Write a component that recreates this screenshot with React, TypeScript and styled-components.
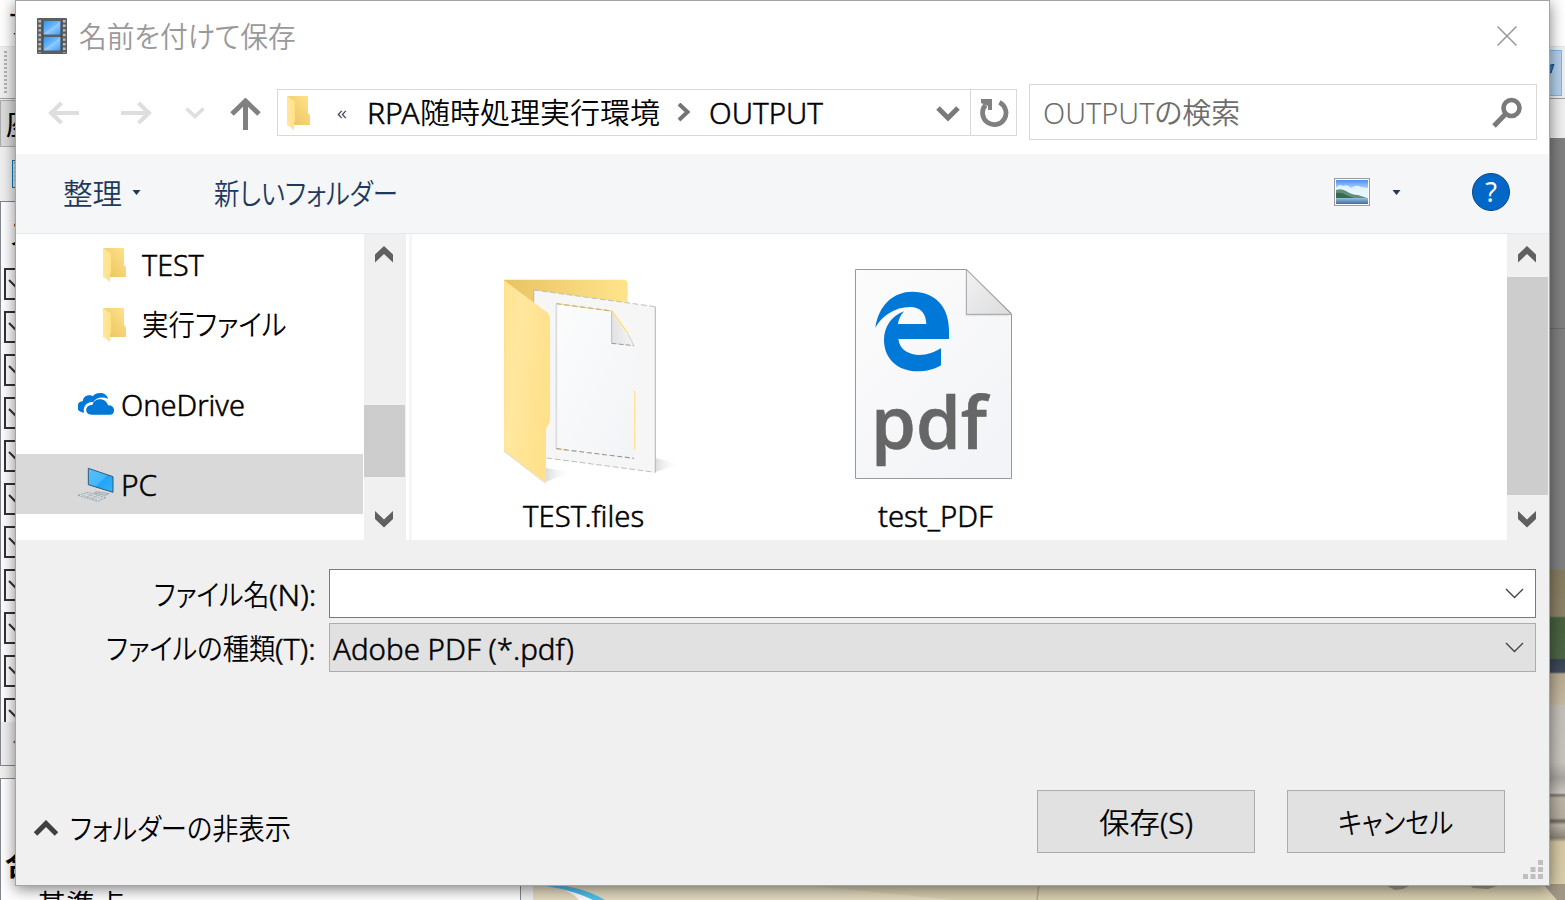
import React, { useLayoutEffect, useRef, useState } from 'react';
import styled, { createGlobalStyle } from 'styled-components';

const GlobalStyle = createGlobalStyle`
  * { box-sizing: border-box; }
  html, body { margin: 0; padding: 0; overflow: hidden; }
  body { font-family: "Noto Sans", "Noto Sans CJK JP", sans-serif; font-size: 30px; color: #000; }
  svg { display: block; flex: none; }
`;

/* ---------- text squeezed to a UI-font width ---------- */
const FitBox = styled.span<{ $w: number; $size: number; $color: string; $weight: number; $latin: boolean }>`
  display: block;
  flex: none;
  width: ${p => p.$w}px;
  height: 40px;
  line-height: 40px;
  font-size: ${p => p.$size}px;
  font-weight: ${p => p.$weight};
  color: ${p => p.$color};
  white-space: nowrap;
  font-feature-settings: "palt";
  -webkit-text-stroke: ${p => (p.$latin ? 0.5 : 0)}px ${p => p.$color};
`;
const FitInner = styled.span`
  display: inline-block;
  transform-origin: 0 50%;
`;
function Fit({ w, size = 29, color = '#000', weight = 350, children }:
  { w: number; size?: number; color?: string; weight?: number; children: string }) {
  const ref = useRef<HTMLSpanElement>(null);
  const [k, setK] = useState(1);
  useLayoutEffect(() => {
    if (ref.current) setK(w / ref.current.offsetWidth);
  }, [w, size, children]);
  return (
    <FitBox $w={w} $size={size} $color={color} $weight={weight} $latin={/^[ -~]+$/.test(children)}>
      <FitInner ref={ref} style={{ transform: `scaleX(${k})` }}>{children}</FitInner>
    </FitBox>
  );
}

/* ---------- application behind the dialog ---------- */
const Desktop = styled.div`
  position: relative;
  width: 1565px;
  height: 900px;
  overflow: hidden;
  background: #f0f0f0;
  display: flex;
  flex-direction: column;
`;
const MenuBar = styled.div`
  flex: none;
  height: 47px;
  background: #fff;
  border-bottom: 1px solid #e6e6e6;
  padding: 4px 0 0 8px;
`;
const ToolStrip = styled.div`
  flex: none;
  height: 52px;
  border-bottom: 1px solid #a0a0a0;
  display: flex;
  justify-content: space-between;
  align-items: center;
  padding: 0 3px 0 4px;
`;
const DotGrip = styled.div`
  width: 3px;
  height: 44px;
  background: repeating-linear-gradient(#b4b4b4 0 2px, transparent 2px 4px);
`;
const ActiveTool = styled.div`
  width: 30px;
  height: 46px;
  border: 1px solid #7fb9ea;
  background: #b5d2ec;
  display: flex;
  justify-content: flex-end;
  padding: 13px 6px 0 0;
`;
const Work = styled.div`
  flex: 1;
  min-height: 0;
  display: flex;
  align-items: stretch;
`;
const LeftPane = styled.div`
  width: 521px;
  display: flex;
  flex-direction: column;
`;
const CoordButton = styled.div`
  flex: none;
  width: 120px;
  height: 47px;
  margin-top: 1px;
  background: #dcdcdc;
  border: 1px solid #adadad;
  padding: 3px 0 0 5px;
`;
const MiniTools = styled.div`
  flex: none;
  height: 54px;
  padding: 13px 0 0 12px;
`;
const Tree = styled.div`
  flex: none;
  height: 565px;
  background: #fff;
  border: 1px solid #828790;
  padding-left: 3px;
  display: flex;
  flex-direction: column;
`;
const TreeHead = styled.div`
  height: 66px;
  padding: 12px 0 0 6px;
`;
const TreeRows = styled.div`
  height: 454px;
  overflow: hidden;
`;
const CheckBox = styled.div`
  width: 32px;
  height: 32px;
  margin-bottom: 11px;
  border: 2px solid #333;
  display: flex;
  align-items: center;
  padding: 3px 0 0 2px;
`;
const TreeScroll = styled.div`
  flex: 1;
  margin-left: -3px;
  background: #f0f0f0;
  padding: 12px 0 0 12px;
`;
const Detail = styled.div`
  flex: 1;
  min-height: 0;
  overflow: hidden;
  margin-top: 12px;
  background: #fff;
  border: 1px solid #828790;
  border-bottom: 0;
  padding: 4px 0 0 4px;
`;
const DetailHead = styled.div`
  height: 62px;
  padding-left: 8px;
`;
const Point = styled.div`
  padding-left: 32px;
`;
const Photo = styled.div`
  flex: 1;
  margin: 39px 0 0 12px;
  background: linear-gradient(#808080 0 190px, #6d6d6d 190px 191px, #808080 191px 432px,
    #857c5e 432px, #8b8268 478px, #46603d 480px, #4d6545 520px, #384354 522px, #414b5c 534px,
    #b9ab91 536px, #c5b9a2 566px, #c3bfb8 568px, #c8c4be 624px, #a9a59f 640px, #cdc9c2 655px,
    #77746a 657px, #bcb5a5 660px, #b5ad9d 680px, #6c675e 683px, #beb7a8 687px, #8c8476 700px, #d6c8a2 704px, #dbd0af 762px);
  display: flex;
  flex-direction: column;
  justify-content: flex-end;
`;

/* ---------- dialog ---------- */
const Dialog = styled.div`
  position: absolute;
  left: 15px;
  top: 0;
  width: 1535px;
  height: 886px;
  border: 1px solid #a4a4a4;
  background: #f0f0f0;
  box-shadow: 0 3px 14px rgba(0, 0, 0, .5);
  display: flex;
  flex-direction: column;
`;
const TitleBar = styled.div`
  height: 70px;
  background: #fff;
  display: flex;
  align-items: center;
  padding: 0 31px 0 20px;
`;
const TitleText = styled.div`
  flex: 1;
  padding: 1px 0 0 11px;
`;
const NavBar = styled.div`
  height: 83px;
  background: #fff;
  display: flex;
  align-items: center;
  padding: 2px 12px 1px 32px;
`;
const Gap = styled.div<{ $w: number }>`
  flex: none;
  width: ${p => p.$w}px;
`;
const UpArrow = styled.div`
  padding-top: 2px;
`;
const Address = styled.div`
  width: 740px;
  height: 47px;
  margin: -1px 0 0 16px;
  border: 1px solid #d9d9d9;
  display: flex;
  align-items: center;
  padding-left: 9px;
`;
const Refresh = styled.div`
  width: 46px;
  height: 45px;
  margin-left: auto;
  border-left: 1px solid #d9d9d9;
  display: flex;
  align-items: center;
  justify-content: center;
`;
const Search = styled.div`
  width: 508px;
  height: 56px;
  margin: -2px 0 0 12px;
  border: 1px solid #d9d9d9;
  display: flex;
  align-items: center;
  justify-content: space-between;
  padding: 2px 14px 0 13px;
`;
const CommandBar = styled.div`
  height: 80px;
  background: #f4f6f8;
  border-bottom: 1px solid #e6e9ec;
  display: flex;
  align-items: center;
  padding: 0 39px 3px 47px;
`;
const HelpButton = styled.div`
  width: 38px;
  height: 38px;
  border-radius: 50%;
  background: #0268c8;
  border: 1px solid #0a4788;
  color: #fff;
  font: 27px/35px "Noto Sans", sans-serif;
  text-align: center;
`;
const Browser = styled.div`
  height: 306px;
  background: #fff;
  display: flex;
`;
const NavTree = styled.div`
  width: 347px;
  margin-right: 1px;
  padding-top: 1px;
`;
const NavRow = styled.div<{ $indent: number; $selected?: boolean; $before?: number }>`
  height: 60px;
  margin-top: ${p => p.$before ?? 0}px;
  padding-left: ${p => p.$indent}px;
  background: ${p => (p.$selected ? '#d9d9d9' : 'transparent')};
  display: flex;
  align-items: center;
`;
const NavText = styled.div<{ $drop: number }>`
  padding-top: ${p => p.$drop}px;
`;
const ScrollBar = styled.div`
  width: 42px;
  height: 306px;
  background: #f0f0f0;
  display: flex;
  flex-direction: column;
  align-items: flex-start;
`;
const ScrollButton = styled.div<{ $top?: number }>`
  width: 41px;
  height: 43px;
  padding: ${p => p.$top ?? 12}px 0 0 10px;
`;
const Track = styled.div`
  flex: 1;
`;
const Thumb = styled.div<{ $top: number; $h: number }>`
  width: 41px;
  height: ${p => p.$h}px;
  margin-top: ${p => p.$top}px;
  background: #cdcdcd;
`;
const Splitter = styled.div`
  width: 3px;
  margin-left: 3px;
  background: #f6f6f6;
`;
const Files = styled.div`
  flex: 1;
  display: flex;
`;
const FileCell = styled.div<{ $w: number }>`
  width: ${p => p.$w}px;
  display: flex;
  flex-direction: column;
  align-items: center;
`;
const Thumbnail = styled.div<{ $top: number; $left: number; $right: number }>`
  height: 262px;
  padding: ${p => p.$top}px ${p => p.$right}px 0 ${p => p.$left}px;
`;
const Form = styled.div`
  padding-top: 29px;
  display: flex;
  flex-direction: column;
  gap: 5px;
`;
const FormRow = styled.div`
  display: flex;
  align-items: center;
  height: 49px;
`;
const FieldLabel = styled.div`
  width: 300px;
  margin-right: 13px;
  padding-top: 3px;
  display: flex;
  justify-content: flex-end;
`;
const Combo = styled.div<{ $filled?: boolean }>`
  width: 1207px;
  height: 49px;
  border: 1px solid ${p => (p.$filled ? '#adadad' : '#7a7a7a')};
  background: ${p => (p.$filled ? '#e1e1e1' : '#fff')};
  display: flex;
  align-items: center;
  padding: 0 11px 0 3px;
`;
const ComboText = styled.div`
  padding-top: 3px;
`;
const Chevron = styled.div`
  margin-left: auto;
`;
const Footer = styled.div`
  flex: 1;
  display: flex;
  align-items: flex-start;
  padding: 118px 6px 0 18px;
`;
const HideFolders = styled.div`
  display: flex;
  align-items: center;
  gap: 12px;
  padding-top: 17px;
  width: 1003px;
`;
const Button = styled.div`
  width: 218px;
  height: 63px;
  margin-right: 32px;
  border: 1px solid #adadad;
  background: #e1e1e1;
  display: flex;
  align-items: center;
  justify-content: center;
  padding: 2px 1px 0 0;
`;
const SizeGrip = styled.div`
  margin-left: -14px;
  padding-top: 70px;
`;

/* ---------- icons ---------- */
const FilmIcon = () => (
  <svg width="32" height="38" viewBox="0 0 32 38">
    <defs>
      <linearGradient id="film" x1="0" y1="0" x2="1" y2="1">
        <stop offset="0" stopColor="#2f93f5" /><stop offset=".48" stopColor="#6cb8fd" /><stop offset=".52" stopColor="#94ccff" /><stop offset="1" stopColor="#3c9cf5" />
      </linearGradient>
    </defs>
    <rect x="1" y="1" width="30" height="36" rx="1" fill="#5c5f62" />
    <rect x="7" y="4" width="18" height="13.5" fill="url(#film)" />
    <rect x="7" y="20" width="18" height="13.500" fill="url(#film)" />
    <path d="M7 4V34M25 4V34" stroke="#3c3f42" strokeWidth="1" />
    <path d="M3.700 3V36M28.300 3V36" stroke="#b9bdc0" strokeWidth="2.600" strokeDasharray="2.400 2.200" />
  </svg>
);
const Arrow = ({ flip = false }: { flip?: boolean }) => (
  <svg width="31" height="24" viewBox="0 0 31 24">
    <path d={flip ? 'M0 12H28M17.5 2 28 12 17.5 22' : 'M31 12H3M13.5 2 3 12 13.5 22'} fill="none" stroke="#dedede" strokeWidth="4" />
  </svg>
);
const SmallFolder = () => (
  <svg width="26" height="36" viewBox="0 0 26 36">
    <defs>
      <linearGradient id="sfb" x1="0" x2="1" y1="1" y2="0"><stop offset="0" stopColor="#e9c25b" /><stop offset="1" stopColor="#ffe38c" /></linearGradient>
      <linearGradient id="sff" x1="0" x2="1"><stop offset="0" stopColor="#ffe79b" /><stop offset="1" stopColor="#ffe189" /></linearGradient>
    </defs>
    <path d="M0 1H21V18L23 20V30H0Z" fill="url(#sfb)" />
    <path d="M0 1 8 6.500V26L7 28V35L0 29.500Z" fill="url(#sff)" />
  </svg>
);
const ScrollChevron = ({ down = false }: { down?: boolean }) => (
  <svg width="20" height="17" viewBox="0 0 20 17">
    <path d={down ? 'M1 0 10 8.500 19 0V8L10 16.500 1 8Z' : 'M1 16.500V8.500L10 0 19 8.500V16.500L10 8Z'} fill="#606060" />
  </svg>
);
const Caret = () => <svg width="9" height="5" viewBox="0 0 9 5"><path d="M.5 0H8.500L4.500 5Z" fill="#1e395b" /></svg>;
const ComboArrow = () => (
  <svg width="19" height="11" viewBox="0 0 19 11"><path d="M1 1 9.500 9.500 18 1" fill="none" stroke="#444" strokeWidth="1.4" /></svg>
);
const OneDrive = () => (
  <svg width="36" height="24" viewBox="234 487 108 72">
    <path d="M252 546C222 543 230 511 248 512C250 492 272 491 278 497C290 482 320 484 324 504C306 496 286 501 280 514C260 512 248 528 252 546Z" fill="#0078d7" />
    <path d="M274 552C252 552 254 522 277 523C282 500 318 499 324 524C348 523 346 552 331 552Z" fill="#0078d7" />
  </svg>
);
const Computer = () => (
  <svg width="37" height="35" viewBox="234 712 111 105">
    <defs><linearGradient id="scr" x1="0" x2="1" y1="0" y2="1"><stop offset="0" stopColor="#58c0ff" /><stop offset=".5" stopColor="#43b7ff" /><stop offset=".55" stopColor="#22a5f8" /><stop offset="1" stopColor="#35b0ff" /></linearGradient></defs>
    <path d="M234 797 264 788 318 804 293 815Z" fill="#d7dde2" stroke="#7d858b" strokeWidth="2" strokeDasharray="6 3" />
    <path d="M248 797 292 810M259 793 306 807M276 793 262 802M292 797 277 807" stroke="#a5adb2" strokeWidth="2" />
    <path d="M287 786 327 792 316 797 283 790Z" fill="#cbd3d8" stroke="#8a949b" strokeWidth="2" />
    <path d="M265 716 339 741V788L265 765Z" fill="url(#scr)" stroke="#315b78" strokeWidth="3" />
  </svg>
);
const Landscape = () => (
  <svg width="36" height="28" viewBox="0 0 36 28">
    <defs><linearGradient id="sky" x1="0" x2="0" y1="0" y2="1"><stop offset="0" stopColor="#4e8ff8" /><stop offset=".5" stopColor="#d9efff" /></linearGradient>
      <linearGradient id="sea" x1="0" x2="0" y1="0" y2="1"><stop offset="0" stopColor="#9cc0da" /><stop offset="1" stopColor="#3c6ea8" /></linearGradient></defs>
    <rect x=".5" y=".5" width="35" height="27" fill="#fff" stroke="#9b9b9b" />
    <rect x="2" y="2" width="32" height="24" fill="url(#sky)" />
    <path d="M2 10Q5 5 9 8Q14 6 17 10Q23 6 27 9L34 10V19H2Z" fill="#e9f5fd" opacity=".9" />
    <path d="M2 12Q7 10 12 13Q18 17 24 17L33 20H2Z" fill="#5f917a" />
    <path d="M2 15Q8 14 14 18L20 20H2Z" fill="#37694f" />
    <rect x="2" y="20" width="32" height="6" fill="url(#sea)" />
  </svg>
);
const BigFolder = () => (
  <svg width="176" height="206" viewBox="72 88 528 618">
    <defs>
      <linearGradient id="bfb" x1="0" x2="1"><stop offset="0" stopColor="#e8c361" /><stop offset="1" stopColor="#ffe48c" /></linearGradient>
      <linearGradient id="bff" x1="0" x2="1" y1="0" y2=".4"><stop offset="0" stopColor="#ffe08a" /><stop offset=".35" stopColor="#ffe79f" /><stop offset="1" stopColor="#ffe18b" /></linearGradient>
      <linearGradient id="bfs" x1="0" x2="1"><stop offset="0" stopColor="#dcdcdc" /><stop offset="1" stopColor="#fff" stopOpacity="0" /></linearGradient>
      <linearGradient id="bfp" x1="0" x2="1" y1="0" y2="1"><stop offset="0" stopColor="#fbfcfc" /><stop offset="1" stopColor="#f2f4f7" /></linearGradient>
      <linearGradient id="bfc" x1="0" x2="1"><stop offset="0" stopColor="#e2e2e2" /><stop offset="1" stopColor="#f4f4f4" /></linearGradient>
    </defs>
    <path d="M526 625 600 643 526 667Z" fill="url(#bfs)" />
    <path d="M198 655 275 667 198 696Z" fill="url(#bfs)" />
    <path d="M72 90H436L443 97V330H72Z" fill="url(#bfb)" />
    <path d="M161 121 526 171V668L161 620Z" fill="#f6f6f6" />
    <path d="M161 121 526 171M200 625 526 668" stroke="#bdbdbd" strokeWidth="3" strokeDasharray="17 8" />
    <path d="M161 121V300M526 171V668" stroke="#b4b4b4" strokeWidth="3" />
    <path d="M229 162 396 184 462 288V626L229 597Z" fill="url(#bfp)" />
    <path d="M229 597 262 601M464 423V602" stroke="#ffe08a" strokeWidth="3.500" />
    <path d="M229 162V597" stroke="#dadcdd" strokeWidth="5" />
    <path d="M229 597 462 626" stroke="#999" strokeWidth="3.500" strokeDasharray="15 8" />
    <path d="M395 186V281L461 288Z" fill="url(#bfc)" />
    <path d="M229 162 396 184 444 252" fill="none" stroke="#ffdc73" strokeWidth="4" />
    <path d="M444 254 462 288" stroke="#b4b4b4" strokeWidth="2" />
    <path d="M229 162 396 184" stroke="#a9a9a9" strokeWidth="3" strokeDasharray="15 9" />
    <path d="M395 186V281" stroke="#b4b4b4" strokeWidth="2.500" />
    <path d="M395 281 461 288" stroke="#999" strokeWidth="3" strokeDasharray="15 6" />
    <path d="M72 92 200 187Q210 195 210 205V515L198 538V700L72 604Z" fill="url(#bff)" />
    <path d="M82 110V595M93 118V600" stroke="#ffeaa8" strokeWidth="3" />
    <path d="M72 604 195 700" stroke="#d3c69f" strokeWidth="2" />
  </svg>
);
const PdfText = styled.text`
  font-family: "Open Sans", sans-serif;
  font-weight: 600;
  font-size: 218px;
  fill: #666;
  stroke: #666;
  stroke-width: 2px;
`;
const PdfIcon = () => (
  <svg width="157" height="210" viewBox="75 57 471 630">
    <defs>
      <linearGradient id="pg" x1="0" x2=".7" y1="0" y2="1"><stop offset="0" stopColor="#fcfcfc" /><stop offset="1" stopColor="#f3f4f7" /></linearGradient>
      <linearGradient id="pc" x1="0" x2="1" y1="0" y2="1"><stop offset="0" stopColor="#f2f2f2" /><stop offset="1" stopColor="#dcdcdc" /></linearGradient>
    </defs>
    <path d="M76.500 58.500H410L544.500 191V685.500H76.500Z" fill="url(#pg)" stroke="#97999b" strokeWidth="3" />
    <path d="M406 196H536" stroke="#e3e5e7" strokeWidth="6" />
    <path d="M409 59V193H544Z" fill="url(#pc)" stroke="#a0a2a4" strokeWidth="3" />
    <path d="M136 233C146 165 190 125 247 125C315 125 357 170 357 240V267H205C208 300 240 315 268 315C292 315 315 306 333 295V346C312 358 290 364 262 364C205 364 162 327 162 270C162 230 185 197 222 184C210 197 206 210 204 222H289C288 190 272 171 240 171C195 171 155 198 136 233Z" fill="#0078d7" />
    <PdfText x="123" y="598" textLength="348" lengthAdjust="spacingAndGlyphs">pdf</PdfText>
  </svg>
);

export default function App() {
  return (
    <Desktop>
      <GlobalStyle />
      <MenuBar><Fit w={28} weight={400}>フ</Fit></MenuBar>
      <ToolStrip>
        <DotGrip />
        <ActiveTool><svg width="10" height="12" viewBox="0 0 10 12"><path d="M9 0 6 9H0V3Z" fill="#2d7dc8" stroke="#1b4d86" /></svg></ActiveTool>
      </ToolStrip>
      <Work>
        <LeftPane>
          <CoordButton><Fit w={60} weight={400}>座標</Fit></CoordButton>
          <MiniTools>
            <svg width="26" height="28" viewBox="0 0 26 28"><rect x=".5" y=".5" width="25" height="27" fill="#dbe9f2" stroke="#0e7bbd" /><path d="M2 3H24" stroke="#d8a24a" strokeWidth="2" /><path d="M2 8H24M2 12H24M2 16H24M2 20H24" stroke="#97b2c5" /></svg>
          </MiniTools>
          <Tree>
            <TreeHead><Fit w={28} weight={400}>ス</Fit></TreeHead>
            <TreeRows>
              {Array.from({ length: 11 }, (_, i) => (
                <CheckBox key={i}>
                  <svg width="24" height="16" viewBox="0 0 24 16"><path d="M1 2 10 11 22 0" fill="none" stroke="#333" strokeWidth="2" /></svg>
                </CheckBox>
              ))}
            </TreeRows>
            <TreeScroll><svg width="10" height="16" viewBox="0 0 10 16"><path d="M10 0 0 8 10 16Z" fill="#606060" /></svg></TreeScroll>
          </Tree>
          <Detail>
            <DetailHead><Fit w={28} weight={400}>フ</Fit></DetailHead>
            <Fit w={60} weight={700}>合計</Fit>
            <Point><Fit w={88}>基準点</Fit></Point>
          </Detail>
        </LeftPane>
        <Photo>
          <svg width="1032" height="16" viewBox="0 0 1032 16">
            <rect width="1032" height="16" fill="#d9cfb0" />
            <path d="M0 0H260L420 16H0Z" fill="#e3dac0" />
            <path d="M22 3Q40 8 46 16H66Q50 7 22 3Z" fill="#fff" />
            <path d="M0 0H22Q54 5 72 16H60Q38 5 0 0Z" fill="#4fbfee" />
            <path d="M506 0 504 16" stroke="#b3a98b" strokeWidth="1.5" />
            <path d="M850 0H880L870 5 862 6ZM935 0H970L955 5 940 4ZM1010 0H1032V16H1024L1016 7Z" fill="#94897a" opacity=".8" />
          </svg>
        </Photo>
      </Work>

      <Dialog>
        <TitleBar>
          <FilmIcon />
          <TitleText><Fit w={217} color="#999">名前を付けて保存</Fit></TitleText>
          <svg width="22" height="20" viewBox="0 0 22 20"><path d="M1.500 .5 20.500 19.500M20.500 .5 1.500 19.500" stroke="#999" strokeWidth="1.500" /></svg>
        </TitleBar>
        <NavBar>
          <Arrow /><Gap $w={42} /><Arrow flip /><Gap $w={33} />
          <svg width="20" height="14" viewBox="0 0 20 14"><path d="M1.500 2.500 10 10.500 18.500 2.500" fill="none" stroke="#dedede" strokeWidth="3.600" /></svg>
          <Gap $w={25} />
          <UpArrow><svg width="31" height="32" viewBox="0 0 31 32"><path d="M15.500 32V3M2 16 15.500 3 29 16" fill="none" stroke="#808080" strokeWidth="5" /></svg></UpArrow>
          <Address>
            <SmallFolder />
            <Gap $w={24} /><Fit w={10} size={20} color="#333">«</Fit>
            <Gap $w={20} /><Fit w={53}>RPA</Fit><Fit w={240}>随時処理実行環境</Fit>
            <Gap $w={17} />
            <svg width="14" height="20" viewBox="0 0 14 20"><path d="M2 1 10.500 9 2 17" fill="none" stroke="#747474" strokeWidth="4" /></svg>
            <Gap $w={18} /><Fit w={114}>OUTPUT</Fit>
            <Gap $w={113} />
            <svg width="24" height="18" viewBox="0 0 24 18"><path d="M2 4 12 14 22 4" fill="none" stroke="#7a7a7a" strokeWidth="5" /></svg>
            <Refresh>
              <svg width="30" height="34" viewBox="0 0 30 34"><path d="M20.400 6.400A11.700 11.700 0 1 1 6.500 9.200" fill="none" stroke="#808080" strokeWidth="4.800" /><path d="M2 3H13V14H9V10L2 7Z" fill="#808080" /></svg>
            </Refresh>
          </Address>
          <Search>
            <Fit w={197} color="#6d6d6d">OUTPUTの検索</Fit>
            <svg width="30" height="32" viewBox="0 0 30 32"><circle cx="19.500" cy="11" r="8" fill="none" stroke="#7a7a7a" strokeWidth="4.600" /><path d="M14 16.500 2 29" stroke="#7a7a7a" strokeWidth="5" /></svg>
          </Search>
        </NavBar>
        <CommandBar>
          <NavText $drop={3}><Fit w={59} color="#1e395b">整理</Fit></NavText><Gap $w={10} /><Caret />
          <Gap $w={73} /><NavText $drop={3}><Fit w={184} color="#1e395b">新しいフォルダー</Fit></NavText>
          <Gap $w={936} /><Landscape /><Gap $w={22} /><Caret /><Gap $w={71} />
          <HelpButton>?</HelpButton>
        </CommandBar>
        <Browser>
          <NavTree>
            <NavRow $indent={87}><SmallFolder /><Gap $w={13} /><Fit w={62}>TEST</Fit></NavRow>
            <NavRow $indent={87}><SmallFolder /><Gap $w={13} /><Fit w={144}>実行ファイル</Fit></NavRow>
            <NavRow $indent={62} $before={20}><OneDrive /><Gap $w={7} /><Fit w={124}>OneDrive</Fit></NavRow>
            <NavRow $indent={62} $before={19} $selected><Computer /><Gap $w={6} /><NavText $drop={2}><Fit w={36}>PC</Fit></NavText></NavRow>
          </NavTree>
          <ScrollBar>
            <ScrollButton><ScrollChevron /></ScrollButton>
            <Track><Thumb $top={128} $h={72} /></Track>
            <ScrollButton $top={14}><ScrollChevron down /></ScrollButton>
          </ScrollBar>
          <Splitter />
          <Files>
            <FileCell $w={343}><Thumbnail $top={45} $left={17} $right={0}><BigFolder /></Thumbnail><Fit w={121}>TEST.files</Fit></FileCell>
            <FileCell $w={361}><Thumbnail $top={35} $left={0} $right={4}><PdfIcon /></Thumbnail><Fit w={115}>test_PDF</Fit></FileCell>
          </Files>
          <ScrollBar>
            <ScrollButton><ScrollChevron /></ScrollButton>
            <Track><Thumb $top={0} $h={218} /></Track>
            <ScrollButton $top={14}><ScrollChevron down /></ScrollButton>
          </ScrollBar>
        </Browser>
        <Form>
          <FormRow>
            <FieldLabel><Fit w={115}>ファイル名</Fit><Fit w={47}>(N):</Fit></FieldLabel>
            <Combo><Chevron><ComboArrow /></Chevron></Combo>
          </FormRow>
          <FormRow>
            <FieldLabel><Fit w={169}>ファイルの種類</Fit><Fit w={41}>(T):</Fit></FieldLabel>
            <Combo $filled><ComboText><Fit w={241}>Adobe PDF (*.pdf)</Fit></ComboText><Chevron><ComboArrow /></Chevron></Combo>
          </FormRow>
        </Form>
        <Footer>
          <HideFolders>
            <svg width="24" height="16" viewBox="0 0 24 16"><path d="M1.500 14 12 3.500 22.500 14" fill="none" stroke="#404040" strokeWidth="5" /></svg>
            <NavText $drop={2}><Fit w={221}>フォルダーの非表示</Fit></NavText>
          </HideFolders>
          <Button><Fit w={61}>保存</Fit><Fit w={33}>(S)</Fit></Button>
          <Button><Fit w={115}>キャンセル</Fit></Button>
          <SizeGrip>
            <svg width="20" height="20" viewBox="0 0 20 20"><path d="M15 0H20V5H15ZM15 7H20V12H15ZM15 14H20V19H15ZM7.500 7H12.500V12H7.500ZM7.500 14H12.500V19H7.500ZM0 14H5V19H0Z" fill="#bfbfbf" /></svg>
          </SizeGrip>
        </Footer>
      </Dialog>
    </Desktop>
  );
}
